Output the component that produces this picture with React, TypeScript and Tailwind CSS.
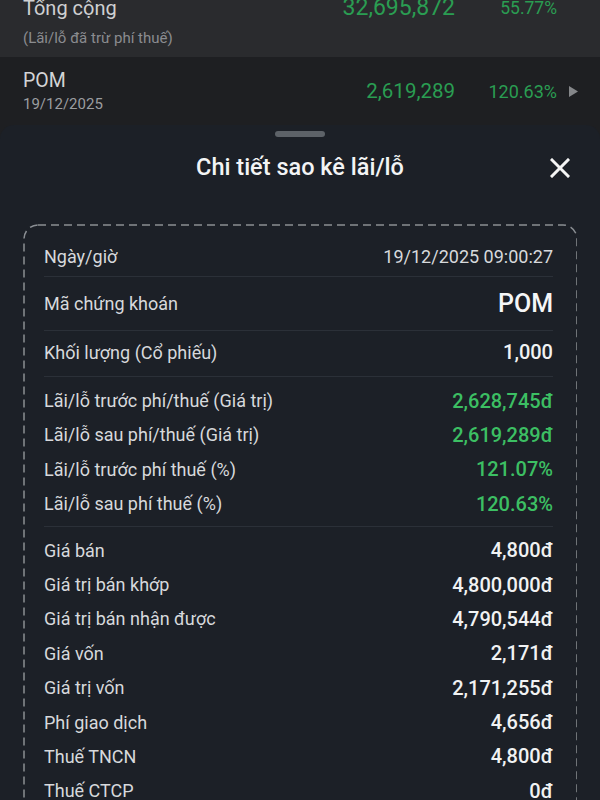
import React from "react";

const font = { fontFamily: "Roboto, 'Noto Sans', sans-serif" };

function Row({ label, value, green }: { label: string; value: string; green?: boolean }) {
  return (
    <div className="flex h-[34.4px] items-center justify-between">
      <span className="text-[18px] text-[#d7d9dc]">{label}</span>
      <span className={`text-[20px] font-medium ${green ? "text-[#3cbf63]" : "text-[#f1f2f3]"}`}>{value}</span>
    </div>
  );
}

export default function App() {
  return (
    <div className="flex w-[600px] h-[800px] flex-col overflow-hidden bg-[#1e1f22]" style={font}>
      {/* dimmed page behind */}
      <div className="flex h-[57px] shrink-0 flex-col bg-[#2a2b2e] pl-[23px] pr-[22px]">
        <div className="flex h-[26px] -mt-[5px] items-center">
          <span className="flex-1 text-[20px] text-[#cfd0d2]">Tổng cộng</span>
          <span className="text-[23px] text-[#2a9d52]">32,695,872</span>
          <span className="w-[102px] text-right text-[17.5px] text-[#2a9d52]">55.77%</span>
          <span className="w-[21px]" />
        </div>
        <div className="mt-[6px] text-[15px] text-[#8a8c90]">(Lãi/lỗ đã trừ phí thuế)</div>
      </div>
      <div className="flex h-[68px] shrink-0 items-center pl-[23px] pr-[22px]">
        <div className="flex flex-1 flex-col">
          <span className="text-[19.5px] leading-[24px] text-[#d3d4d6]">POM</span>
          <span className="mt-[1px] text-[15px] leading-[20px] text-[#9b9da0]">19/12/2025</span>
        </div>
        <span className="text-[20.5px] text-[#2a9d52]">2,619,289</span>
        <span className="w-[102px] text-right text-[18px] text-[#2a9d52]">120.63%</span>
        <span className="flex w-[21px] justify-end">
          <svg width="9" height="11" viewBox="0 0 9 11"><path d="M0 0 L9 5.5 L0 11 Z" fill="#85878a" /></svg>
        </span>
      </div>

      {/* bottom sheet */}
      <div className="h-[700px] shrink-0 rounded-t-[14px] bg-[#1c2027]">
        <div className="flex justify-center pt-[6px]">
          <div className="h-[6px] w-[50px] rounded-full bg-[#5d6268]" />
        </div>
        <div className="grid h-[62px] grid-cols-[1fr_auto_1fr] items-center">
          <div />
          <span className="text-[23.5px] font-medium text-[#f3f4f5]">Chi tiết sao kê lãi/lỗ</span>
          <div className="flex justify-end pr-[30px]">
            <svg width="20" height="20" viewBox="0 0 20 20" fill="none">
              <path d="M2 2 L18 18 M18 2 L2 18" stroke="#f5f5f5" strokeWidth="3" strokeLinecap="square" />
            </svg>
          </div>
        </div>

        <div className="relative mx-[23px] mt-[25px] h-[620px] pl-[21px] pr-[24px]">
          <svg className="absolute inset-0 h-full w-full" preserveAspectRatio="none">
            <rect x="1" y="1" width="553" height="640" rx="14" fill="none" stroke="#8a8e93" strokeWidth="1.5" strokeDasharray="8 5" />
          </svg>
          <div className="pt-[15px] pb-[3px]">
            <div className="flex h-[34px] items-center justify-between">
              <span className="text-[18px] text-[#d7d9dc]">Ngày/giờ</span>
              <span className="text-[18px] text-[#d7d9dc]">19/12/2025 09:00:27</span>
            </div>
          </div>
          <div className="h-px bg-[#2b3038]" />
          <div className="flex h-[53px] items-center justify-between">
            <span className="text-[18px] text-[#d7d9dc]">Mã chứng khoán</span>
            <span className="text-[25px] font-medium text-[#f5f6f7]">POM</span>
          </div>
          <div className="h-px bg-[#2b3038]" />
          <div className="pt-[4px] pb-[7px]">
            <Row label="Khối lượng (Cổ phiếu)" value="1,000" />
          </div>
          <div className="h-px bg-[#2b3038]" />
          <div className="pt-[6px] pb-[5px]">
            <Row label="Lãi/lỗ trước phí/thuế (Giá trị)" value="2,628,745đ" green />
            <Row label="Lãi/lỗ sau phí/thuế (Giá trị)" value="2,619,289đ" green />
            <Row label="Lãi/lỗ trước phí thuế (%)" value="121.07%" green />
            <Row label="Lãi/lỗ sau phí thuế (%)" value="120.63%" green />
          </div>
          <div className="h-px bg-[#2b3038]" />
          <div className="pt-[6px]">
            <Row label="Giá bán" value="4,800đ" />
            <Row label="Giá trị bán khớp" value="4,800,000đ" />
            <Row label="Giá trị bán nhận được" value="4,790,544đ" />
            <Row label="Giá vốn" value="2,171đ" />
            <Row label="Giá trị vốn" value="2,171,255đ" />
            <Row label="Phí giao dịch" value="4,656đ" />
            <Row label="Thuế TNCN" value="4,800đ" />
            <Row label="Thuế CTCP" value="0đ" />
          </div>
        </div>
      </div>
    </div>
  );
}
